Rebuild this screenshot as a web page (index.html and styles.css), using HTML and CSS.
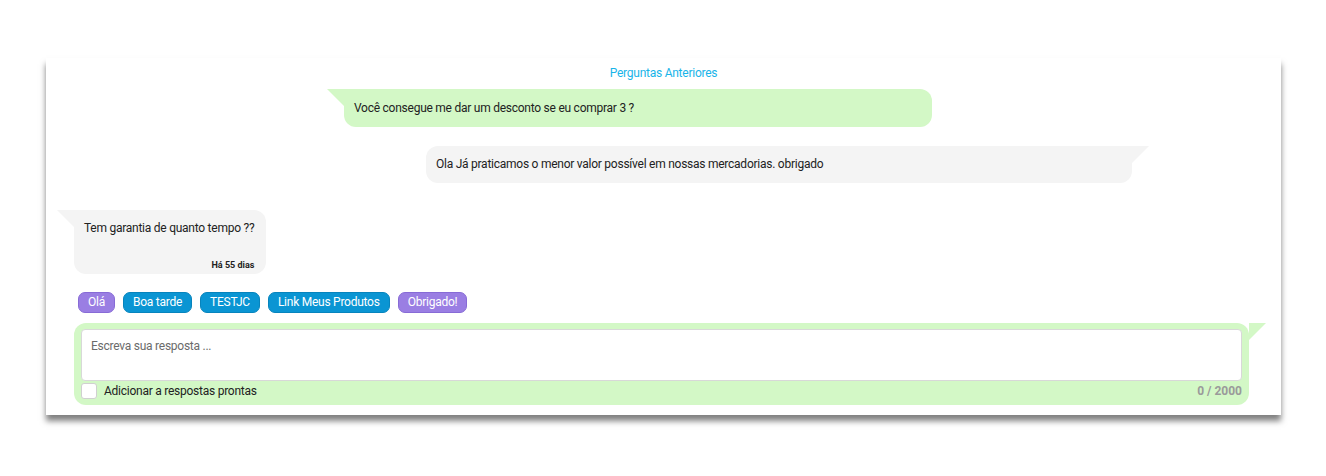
FILE: index.html
```html
<!DOCTYPE html>
<html lang="pt">
<head>
<meta charset="utf-8">
<link rel="stylesheet" href="styles.css">
</head>
<body>
<div class="card">
  <div class="title">Perguntas Anteriores</div>
  <div class="bubble green tail-left b1">Você consegue me dar um desconto se eu comprar 3 ?</div>
  <div class="bubble grey tail-right b2">Ola Já praticamos o menor valor possível em nossas mercadorias. obrigado</div>
  <div class="bubble grey tail-left b3">
    <div class="q">Tem garantia de quanto tempo ??</div>
    <div class="ago">Há 55 dias</div>
  </div>
  <div class="chips">
    <span class="chip purple">Olá</span>
    <span class="chip blue">Boa tarde</span>
    <span class="chip blue">TESTJC</span>
    <span class="chip blue">Link Meus Produtos</span>
    <span class="chip purple">Obrigado!</span>
  </div>
  <div class="reply tail-right">
    <div class="textarea">Escreva sua resposta ...</div>
    <div class="reply-foot">
      <label class="check"><span class="box"></span>Adicionar a respostas prontas</label>
      <span class="count">0 / 2000</span>
    </div>
  </div>
</div>
</body>
</html>
```
FILE: styles.css
```css
* { box-sizing: border-box; }
html, body { margin: 0; background: #fff; }
body {
  min-height: 476px;
  padding: 58px 45px 20px 46px;
  font-family: Roboto, "Open Sans", sans-serif;
  font-size: 12px;
  letter-spacing: -0.25px;
  color: #222;
}
.card {
  width: 1235px;
  height: 357px;
  background: #fff;
  box-shadow: 0 6px 6px rgba(0,0,0,0.5);
  display: flex;
  flex-direction: column;
  padding: 8px 0 0 28px;
}
.title {
  text-align: center;
  color: #18b4e9;
  line-height: 14px;
  margin-left: -28px;
}
.bubble {
  position: relative;
  border-radius: 12px;
  line-height: 14px;
}
.green { background: #d3f8c6; }
.grey { background: #f4f4f4; }
.tail-left { border-top-left-radius: 0; }
.tail-right { border-top-right-radius: 0; }
.tail-left::before, .tail-right::before {
  content: "";
  position: absolute;
  top: 0;
  width: 17px;
  height: 17px;
  background: inherit;
}
.tail-left::before { left: -17px; clip-path: polygon(0 0, 100% 0, 100% 100%); }
.tail-right::before { right: -17px; clip-path: polygon(0 0, 100% 0, 0 100%); }
.b1 {
  margin: 9px 0 0 270px;
  width: 588px;
  height: 38px;
  padding: 12px 10px;
}
.b2 {
  margin: 19px 0 0 352px;
  width: 706px;
  height: 37px;
  padding: 11px 10px;
}
.b3 {
  margin: 27px 0 0 0;
  align-self: flex-start;
  height: 64px;
  padding: 11px 12px 0 10px;
  display: flex;
  flex-direction: column;
}
.ago {
  margin-top: auto;
  margin-bottom: 3px;
  text-align: right;
  font-size: 9px;
  letter-spacing: 0;
  font-weight: 700;
  color: #222;
  line-height: 11px;
}
.chips {
  display: flex;
  gap: 8px;
  margin: 18px 0 0 4px;
}
.chip {
  height: 21px;
  padding: 0 9px;
  border-radius: 7px;
  color: #fff;
  line-height: 19px;
  font-size: 12px;
  border: 1px solid;
}
.purple { background: #9a7ee3; border-color: #876bd6; }
.blue { background: #0a95d3; border-color: #0784bd; }
.reply {
  position: relative;
  margin-top: 10px;
  width: 1175px;
  height: 82px;
  background: #d3f8c6;
  border-radius: 12px;
  padding: 6px 7px 0 7px;
}
.textarea {
  height: 52px;
  background: #fff;
  border: 1px solid #d8d8d8;
  border-radius: 4px;
  padding: 9px 9px;
  color: #6b6b6b;
  line-height: 14px;
}
.reply-foot {
  display: flex;
  justify-content: space-between;
  align-items: center;
  height: 18px;
  margin-top: 1px;
}
.check {
  display: flex;
  align-items: center;
  gap: 7px;
  color: #222;
}
.box {
  width: 16px;
  height: 16px;
  background: #fff;
  border: 1px solid #d0d0d0;
  border-radius: 3px;
}
.count {
  color: #9a9a9a;
  font-weight: 700;
  letter-spacing: 0;
}
```
